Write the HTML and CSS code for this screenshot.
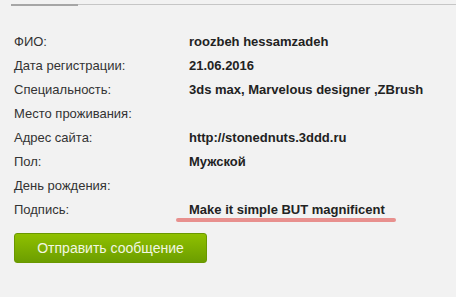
FILE: index.html
```html
<!DOCTYPE html>
<html lang="ru">

<head>
  <meta charset="UTF-8">
  <meta name="viewport" content="width=device-width, initial-scale=1.0">
  <title>Профиль</title>

  <link rel="stylesheet" href="styles.css">
</head>

<body>
  <div class="tabs">
    <div class="tab-active"></div>
    <div class="tab-line"></div>
  </div>

  <div class="profile">
    <div class="row">
      <span class="label">ФИО:</span>
      <span class="value">roozbeh hessamzadeh</span>
    </div>
    <div class="row">
      <span class="label">Дата регистрации:</span>
      <span class="value">21.06.2016</span>
    </div>
    <div class="row">
      <span class="label">Специальность:</span>
      <span class="value">3ds max, Marvelous designer ,ZBrush</span>
    </div>
    <div class="row">
      <span class="label">Место проживания:</span>
      <span class="value"></span>
    </div>
    <div class="row">
      <span class="label">Адрес сайта:</span>
      <span class="value">http://stonednuts.3ddd.ru</span>
    </div>
    <div class="row">
      <span class="label">Пол:</span>
      <span class="value">Мужской</span>
    </div>
    <div class="row">
      <span class="label">День рождения:</span>
      <span class="value"></span>
    </div>
    <div class="row signature">
      <span class="label">Подпись:</span>
      <span class="value">Make it simple BUT magnificent</span>
    </div>

    <button class="send-btn">Отправить сообщение</button>
  </div>
</body>
</html>
```

FILE: styles.css
```css
body {
  background-color: #f2f2f2;
  font-family: 'Liberation Sans', Arial, sans-serif;
  margin: 0;
  color: #333;
}

.tabs {
  display: flex;
  align-items: flex-start;
  margin: 4px 0 0 11px;
}

.tab-active {
  width: 67px;
  height: 2px;
  background-color: #a6a6a6;
}

.tab-line {
  flex: 1;
  height: 1px;
  background-color: #c6c6c6;
}

.profile {
  padding: 24px 14px 0 14px;
}

.row {
  display: flex;
  height: 24px;
  line-height: 24px;
  font-size: 13px;
  position: relative;
}

.label {
  width: 175px;
  color: #333;
}

.value {
  font-weight: bold;
  color: #222;
}

.signature::after {
  content: '';
  position: absolute;
  left: 162px;
  top: 20px;
  width: 220px;
  height: 4px;
  border-radius: 2px;
  background-color: #e8908e;
}

.send-btn {
  display: block;
  margin-top: 11px;
  width: 193px;
  height: 30px;
  border: 1px solid #6a9800;
  border-radius: 3px;
  background: linear-gradient(to bottom, #8fc000, #6c9e00);
  color: #f2f7e2;
  font-family: 'Liberation Sans', Arial, sans-serif;
  font-size: 14px;
  padding: 0;
  cursor: pointer;
}
```
